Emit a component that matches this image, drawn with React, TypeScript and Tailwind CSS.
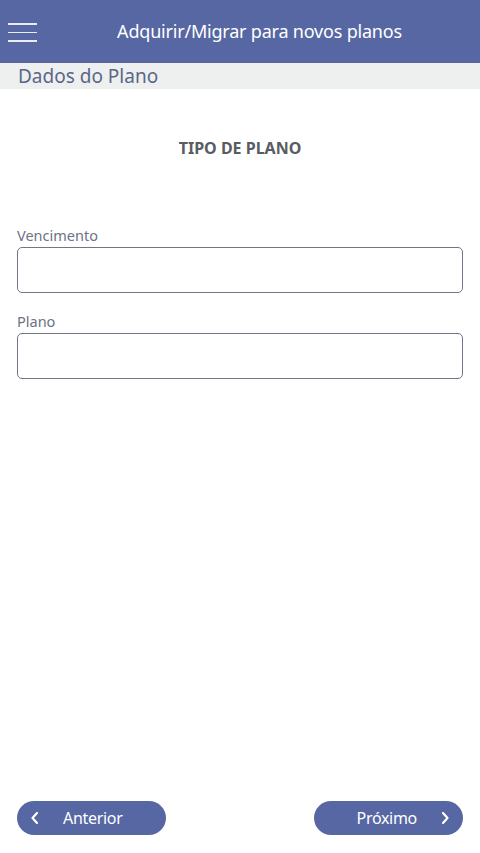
import React from 'react';

function Field({ label }: { label: string }) {
  return (
    <div className="flex flex-col">
      <label className="text-[14.5px] leading-[18px] text-[#6b7384] mb-[3px]">{label}</label>
      <input
        type="text"
        className="h-[46px] w-full rounded-[5px] border-[1.5px] border-[#6f7686] bg-white px-2 outline-none"
      />
    </div>
  );
}

export default function App() {
  return (
    <div
      className="flex h-[853px] w-[480px] flex-col bg-white"
      style={{ fontFamily: '"Noto Sans", "Open Sans", sans-serif' }}
    >
      <header className="relative flex h-[63px] items-center justify-center bg-[#5667a3] text-white">
        <button type="button" className="absolute left-[8px] top-[23px] flex w-[29px] flex-col gap-[7px]">
          <span className="block h-[1.5px] w-full bg-[#e8ecf7]" />
          <span className="block h-[1.5px] w-full bg-[#e8ecf7]" />
          <span className="block h-[1.5px] w-full bg-[#e8ecf7]" />
        </button>
        <h1 className="pl-[39px] text-[18px] font-normal tracking-[-0.2px]">Adquirir/Migrar para novos planos</h1>
      </header>

      <div className="flex h-[26px] items-center bg-[#eef0f0] px-[18px]">
        <span className="text-[19px] leading-none text-[#5a6787]">Dados do Plano</span>
      </div>

      <div className="flex flex-1 flex-col px-[17px]">
        <h2 className="mt-[47px] text-center text-[16px] font-bold text-[#595c63]">TIPO DE PLANO</h2>

        <div className="mt-[66px] flex flex-col gap-[19px]">
          <Field label="Vencimento" />
          <Field label="Plano" />
        </div>

        <div className="mt-auto mb-[18px] flex items-center justify-between">
          <button
            type="button"
            className="flex h-[34px] w-[149px] items-center rounded-full bg-[#5667a3] pl-[13px] text-[16px] text-white"
          >
            <svg width="10" height="14" viewBox="0 0 10 14" fill="none" stroke="white" strokeWidth="2.2" strokeLinecap="round" strokeLinejoin="round">
              <path d="M7 2 L2.5 7 L7 12" />
            </svg>
            <span className="ml-[23px] tracking-[-0.3px]">Anterior</span>
          </button>
          <button
            type="button"
            className="flex h-[34px] w-[149px] items-center justify-end rounded-full bg-[#5667a3] pr-[13px] text-[16px] text-white"
          >
            <span className="mr-[23px] tracking-[-0.3px]">Próximo</span>
            <svg width="10" height="14" viewBox="0 0 10 14" fill="none" stroke="white" strokeWidth="2.2" strokeLinecap="round" strokeLinejoin="round">
              <path d="M3 2 L7.5 7 L3 12" />
            </svg>
          </button>
        </div>
      </div>
    </div>
  );
}
